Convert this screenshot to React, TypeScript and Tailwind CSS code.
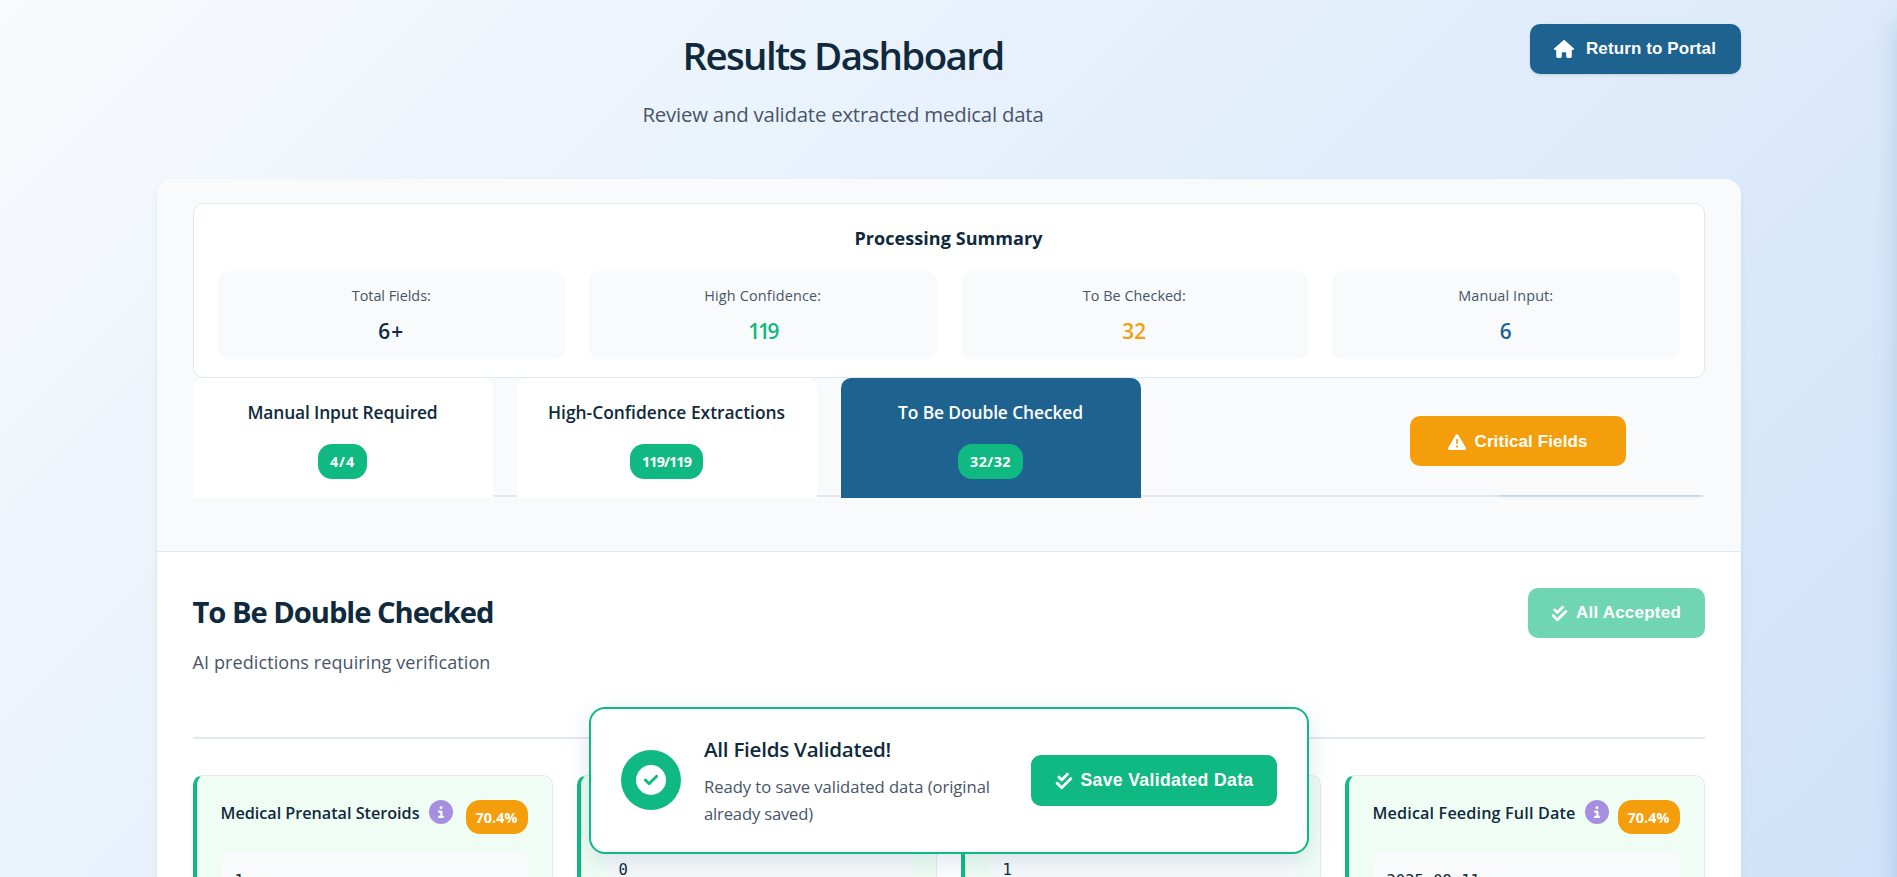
import React from "react";
import { FaHouse, FaTriangleExclamation, FaCheckDouble, FaCircleCheck, FaCircleInfo } from "react-icons/fa6";

const TEXT = "font-['Open_Sans','Noto_Sans',sans-serif]";
const BTN = "font-['Liberation_Sans',Arial,sans-serif]";

/** A single line of text tracked to a fixed measure. */
function Line({ children, w, size, cls = "" }: { children: string; w: number; size: number; cls?: string }) {
  const ref = React.useRef<HTMLSpanElement>(null);
  const [ls, setLs] = React.useState(0);
  React.useLayoutEffect(() => {
    const el = ref.current;
    if (!el) return;
    setLs((w - el.getBoundingClientRect().width) / children.length);
  }, []);
  return (
    <span ref={ref} className={`inline-block whitespace-nowrap ${cls}`} style={{ fontSize: size, letterSpacing: ls }}>
      {children}
    </span>
  );
}

const stats = [
  { label: "Total Fields:", lw: 79, value: "6+", vw: 26, color: "text-[#102a3d]" },
  { label: "High Confidence:", lw: 117, value: "119", vw: 29, color: "text-[#10b981]" },
  { label: "To Be Checked:", lw: 103, value: "32", vw: 24, color: "text-[#f59e0b]" },
  { label: "Manual Input:", lw: 95, value: "6", vw: 12, color: "text-[#1e6390]" },
];

const tabs = [
  { label: "Manual Input Required", lw: 190, count: "4/4", cw: 25, active: false },
  { label: "High-Confidence Extractions", lw: 237, count: "119/119", cw: 49, active: false },
  { label: "To Be Double Checked", lw: 185, count: "32/32", cw: 41, active: true },
];

const cards = [
  { title: "Medical Prenatal Steroids", tw: 199, value: "1", tall: true },
  { title: "", tw: 0, value: "0", tall: false },
  { title: "", tw: 0, value: "1", tall: false },
  { title: "Medical Feeding Full Date", tw: 203, value: "2025-09-11", tall: true },
];

export default function App() {
  return (
    <div
      className={`relative h-[877px] w-full overflow-hidden bg-[linear-gradient(135deg,#f8fafc_0%,#edf4fc_25%,#cfe2f9_100%)] text-[#102a3d] ${TEXT}`}
    >
      <div className="mx-auto w-[1584px]">
        <header className="flex h-[179px] items-start pt-6">
          <div className="flex flex-1 flex-col items-center">
            <h1 className="flex h-16 items-center font-semibold">
              <Line w={321} size={38.5}>Results Dashboard</Line>
            </h1>
            <p className="mt-2 flex h-9 items-center text-[#475569]">
              <Line w={401} size={20.4}>Review and validate extracted medical data</Line>
            </p>
          </div>
          <button className={`flex h-[50px] w-[211px] items-center justify-center gap-3 rounded-[10px] bg-[#1e6390] font-bold text-white shadow-sm ${BTN}`}>
            <FaHouse size={20} />
            <Line w={130} size={17}>Return to Portal</Line>
          </button>
        </header>

        <main className="h-[760px] overflow-hidden rounded-t-2xl bg-white shadow-[0_4px_6px_rgba(30,99,144,0.1)]">
          <section className="h-[373px] border-b border-[#e2e8f0] bg-[#f8fafc] px-9 pt-6">
            <div className="h-[175px] rounded-[10px] border border-[#e2e8f0] bg-white px-6">
              <h3 className="flex h-[67px] items-center justify-center pt-0.5 font-bold">
                <Line w={188} size={18}>Processing Summary</Line>
              </h3>
              <div className="grid grid-cols-4 gap-6">
                {stats.map((s) => (
                  <div key={s.label} className="flex h-[88px] flex-col items-center rounded-[10px] bg-[#f8fafc] pt-[13px]">
                    <span className="flex h-6 items-center text-[#475569]">
                      <Line w={s.lw} size={14.4}>{s.label}</Line>
                    </span>
                    <span className={`mt-2 flex h-8 items-center font-semibold ${s.color}`}>
                      <Line w={s.vw} size={20.8}>{s.value}</Line>
                    </span>
                  </div>
                ))}
              </div>
            </div>

            <div className="relative flex h-[119px] gap-6 border-b-2 border-[#e2e8f0]">
              {tabs.map((t) => (
                <div
                  key={t.label}
                  className={`relative flex h-[120px] w-[300px] flex-col items-center rounded-t-[10px] pt-[18px] font-semibold ${
                    t.active ? "bg-[#1e6390] text-white" : "bg-white"
                  }`}
                >
                  <span className="flex h-8 items-center">
                    <Line w={t.lw} size={17.4}>{t.label}</Line>
                  </span>
                  <span className="mt-4 flex h-[35px] items-center rounded-[14px] bg-[#10b981] px-3 text-white">
                    <Line w={t.cw} size={14.4} cls="font-bold">{t.count}</Line>
                  </span>
                </div>
              ))}
              <div className="ml-auto mt-[66px] h-[51px] w-[211px] rounded-tr-[10px] border-t border-[#f5f8fb] bg-[#f8fafc] shadow-[0_5px_3px_-4px_rgba(30,99,144,0.22)]" />
              <button className={`absolute top-[38px] left-[1217px] flex h-[50px] w-[216px] items-center justify-center gap-[9px] rounded-[10px] bg-[#f59e0b] pt-px font-bold text-white ${BTN}`}>
                <FaTriangleExclamation size={18} />
                <Line w={113} size={17}>Critical Fields</Line>
              </button>
            </div>
          </section>

          <section className="px-9 pt-9">
            <div className="flex h-[151px] items-start justify-between border-b-2 border-[#e2e8f0]">
              <div>
                <h2 className="flex h-[50px] items-center font-bold">
                  <Line w={301} size={29.2}>To Be Double Checked</Line>
                </h2>
                <p className="mt-2 flex h-8 items-center text-[#475569]">
                  <Line w={298} size={18}>AI predictions requiring verification</Line>
                </p>
              </div>
              <button className={`flex h-[50px] w-[177px] items-center justify-center gap-2 rounded-[10px] bg-[#70d5b3] font-bold text-white ${BTN}`}>
                <FaCheckDouble size={17} stroke="currentColor" strokeWidth={22} />
                <Line w={105} size={17}>All Accepted</Line>
              </button>
            </div>
            <div className="mt-9 grid grid-cols-4 gap-6">
              {cards.map((c, i) => (
                <article key={i} className="h-40 rounded-[10px] border border-l-4 border-[#e2e8f0] border-l-[#10b981] bg-[#f0fdf4] px-6 pt-6">
                  <div className={`flex items-start justify-between ${c.tall ? "h-[52px]" : "h-[41px]"}`}>
                    {c.title && (
                      <>
                        <div className="flex h-6 items-center gap-[9px] font-semibold">
                          <Line w={c.tw} size={16.2} cls="pt-0.5">{c.title}</Line>
                          <FaCircleInfo size={24} className="text-[#a78fe0]" />
                        </div>
                        <span className="flex h-[34px] w-[62px] items-center justify-center rounded-[14px] bg-[#f59e0b] pt-px font-bold text-white">
                          <Line w={42} size={14.4}>70.4%</Line>
                        </span>
                      </>
                    )}
                  </div>
                  <div className="h-24 rounded-[10px] bg-[#f8fafc] pt-[17px] pl-[14px] font-['DejaVu_Sans_Mono',monospace] text-[15.5px] leading-6">
                    {c.value}
                  </div>
                </article>
              ))}
            </div>
          </section>
        </main>
      </div>

      <div className="absolute top-[707px] left-[589px] flex h-[147px] w-[720px] items-center rounded-2xl border-2 border-[#10b981] bg-white px-[30px] shadow-[0_8px_25px_rgba(30,99,144,0.15)]">
        <div className="mb-px flex size-[60px] shrink-0 items-center justify-center rounded-full bg-[#10b981] text-white">
          <FaCircleCheck size={30} />
        </div>
        <div className="ml-[23px] flex-1">
          <h4 className="flex h-8 items-center font-semibold">
            <Line w={187} size={20.6}>All Fields Validated!</Line>
          </h4>
          <p className="mt-2 flex flex-col text-[#475569]">
            <span className="flex h-[27px] items-center"><Line w={286} size={16.6}>Ready to save validated data (original</Line></span>
            <span className="flex h-[27px] items-center"><Line w={109} size={16.6}>already saved)</Line></span>
          </p>
        </div>
        <button className={`flex h-[51px] w-[246px] items-center justify-center gap-2 rounded-[10px] bg-[#10b981] font-bold text-white ${BTN}`}>
          <FaCheckDouble size={18} stroke="currentColor" strokeWidth={22} />
          <Line w={173} size={17.6}>Save Validated Data</Line>
        </button>
      </div>

      <div className="absolute top-3 left-full h-[900px] w-[400px] rounded-2xl shadow-[0_8px_25px_rgba(30,99,144,0.2)]" />
    </div>
  );
}
